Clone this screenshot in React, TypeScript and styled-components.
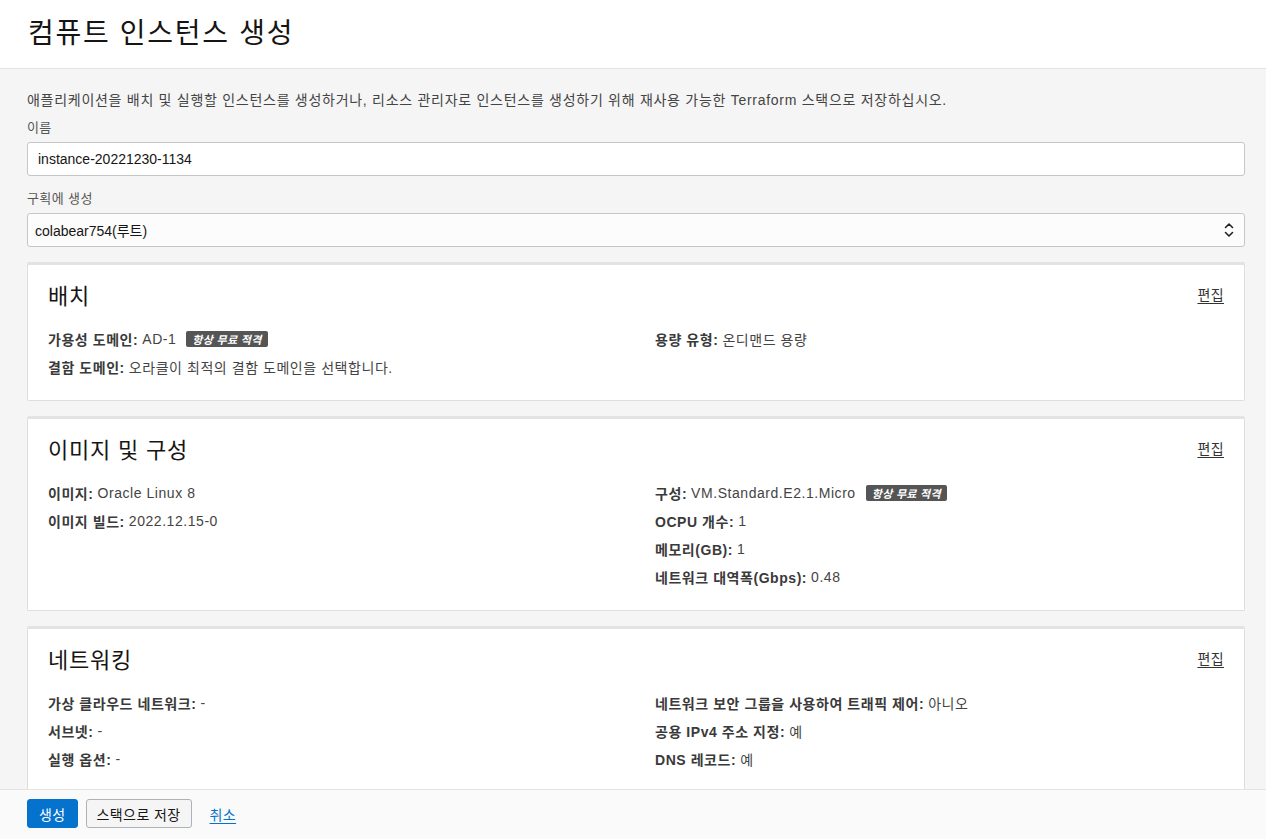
import React from "react";
import styled, { createGlobalStyle } from "styled-components";

const GlobalStyle = createGlobalStyle`
  html, body { margin: 0; padding: 0; height: 100%; }
  body {
    font-family: "Liberation Sans", "Noto Sans CJK KR", sans-serif;
    color: #333;
    background: #f5f5f5;
  }
  * { box-sizing: border-box; }
`;

const Page = styled.div`
  height: 100vh;
  display: flex;
  flex-direction: column;
  overflow: hidden;
`;

const Header = styled.header`
  flex: 0 0 69px;
  background: #fff;
  border-bottom: 1px solid #e3e3e3;
  padding: 0 28px;
  display: flex;
  align-items: center;
`;

const PageTitle = styled.h1`
  margin: 0 0 6px;
  font-size: 28px;
  font-weight: 400;
  color: #161513;
  letter-spacing: 1.7px;
`;

const Main = styled.main`
  flex: 1 1 auto;
  min-height: 0;
  overflow: hidden;
  padding: 21px 21px 0 27px;
`;

const Description = styled.p`
  margin: 0;
  font-size: 14px;
  line-height: 20px;
  color: #444;
  letter-spacing: 0.72px;
`;

const FieldLabel = styled.label<{ $top: number }>`
  display: block;
  font-size: 13px;
  line-height: 18px;
  color: #555;
  letter-spacing: 0.4px;
  margin: ${(p) => p.$top}px 0 5px;
`;

const TextInput = styled.input`
  display: block;
  width: 100%;
  height: 34px;
  border: 1px solid #c4c6ca;
  border-radius: 3px;
  background: #fff;
  padding: 0 10px;
  font-family: inherit;
  font-size: 14px;
  color: #161513;
  outline: none;
`;

const SelectBox = styled.div`
  height: 34px;
  border: 1px solid #c4c6ca;
  border-radius: 3px;
  background: #fcfcfc;
  padding: 0 10px 0 7px;
  font-size: 14px;
  color: #161513;
  display: flex;
  align-items: center;
  justify-content: space-between;
`;

const Cards = styled.div`
  display: flex;
  flex-direction: column;
  gap: 15px;
  margin-top: 15px;
`;

const Card = styled.section`
  flex-shrink: 0;
  background: #fff;
  border: 1px solid #dedede;
  border-top: 3px solid #e2e3e5;
  border-radius: 2px;
  padding: 14px 20px 19px 20px;
`;

const CardHead = styled.div`
  display: flex;
  justify-content: space-between;
  align-items: center;
  height: 30px;
`;

const CardTitle = styled.h2`
  margin: 0;
  font-size: 22px;
  font-weight: 400;
  color: #161513;
  letter-spacing: 0.8px;
`;

const EditLink = styled.a`
  font-size: 14px;
  color: #333;
  text-decoration: underline;
  text-underline-offset: 3px;
  letter-spacing: 0.4px;
  cursor: pointer;
`;

const Grid = styled.div`
  display: grid;
  grid-template-columns: 1fr 1fr;
  column-gap: 38px;
  margin-top: 16px;
`;

const Column = styled.div`
  display: flex;
  flex-direction: column;
`;

const Row = styled.div`
  flex-shrink: 0;
  height: 28px;
  display: flex;
  align-items: center;
  font-size: 14px;
  color: #444;
  letter-spacing: 0.55px;
  white-space: nowrap;
`;

const Key = styled.b`
  font-weight: 700;
  color: #3a3a3a;
  margin-right: 4px;
`;

const Badge = styled.span`
  display: inline-flex;
  align-items: center;
  height: 16px;
  margin-left: 10px;
  padding: 0 6px;
  background: #555;
  color: #fff;
  border-radius: 2px;
  font-size: 11px;
  font-weight: 700;
  font-style: italic;
  letter-spacing: 0.3px;
`;

const Footer = styled.footer`
  flex: 0 0 50px;
  background: #fafafa;
  border-top: 1px solid #e3e3e3;
  display: flex;
  align-items: center;
  padding: 0 27px 2px;
  gap: 8px;
`;

const Button = styled.button<{ $primary?: boolean }>`
  height: 29px;
  padding: 0 ${(p) => (p.$primary ? 11 : 10)}px;
  border-radius: 3px;
  font-family: inherit;
  font-size: 14px;
  letter-spacing: 0.4px;
  cursor: pointer;
  border: 1px solid ${(p) => (p.$primary ? "#0572ce" : "#aeb1b5")};
  background: ${(p) => (p.$primary ? "#0572ce" : "#f5f5f5")};
  color: ${(p) => (p.$primary ? "#fff" : "#161513")};
`;

const CancelLink = styled.a`
  margin-left: 10px;
  font-size: 14px;
  color: #0572ce;
  text-decoration: underline;
  text-underline-offset: 3px;
  letter-spacing: 0.4px;
  cursor: pointer;
`;

const Chevrons = () => (
  <svg width="10" height="16" viewBox="0 0 10 16" fill="none" stroke="#222" strokeWidth="1.6" strokeLinecap="round" strokeLinejoin="round">
    <path d="M1.5 5.5 L5 2 L8.5 5.5" />
    <path d="M1.5 10.5 L5 14 L8.5 10.5" />
  </svg>
);

type Item = { k: string; v?: string; badge?: boolean };

const Section = ({ title, left, right }: { title: string; left: Item[]; right: Item[] }) => (
  <Card>
    <CardHead>
      <CardTitle>{title}</CardTitle>
      <EditLink>편집</EditLink>
    </CardHead>
    <Grid>
      {[left, right].map((col, ci) => (
        <Column key={ci}>
          {col.map((it) => (
            <Row key={it.k}>
              <Key>{it.k}:</Key>
              {it.v}
              {it.badge && <Badge>항상 무료 적격</Badge>}
            </Row>
          ))}
        </Column>
      ))}
    </Grid>
  </Card>
);

export default function App() {
  return (
    <Page>
      <GlobalStyle />
      <Header>
        <PageTitle>컴퓨트 인스턴스 생성</PageTitle>
      </Header>
      <Main>
        <Description>
          애플리케이션을 배치 및 실행할 인스턴스를 생성하거나, 리소스 관리자로 인스턴스를 생성하기 위해 재사용 가능한 Terraform 스택으로 저장하십시오.
        </Description>
        <FieldLabel $top={9}>이름</FieldLabel>
        <TextInput defaultValue="instance-20221230-1134" />
        <FieldLabel $top={14}>구획에 생성</FieldLabel>
        <SelectBox>
          <span>colabear754(루트)</span>
          <Chevrons />
        </SelectBox>
        <Cards>
          <Section
            title="배치"
            left={[
              { k: "가용성 도메인", v: "AD-1", badge: true },
              { k: "결함 도메인", v: "오라클이 최적의 결함 도메인을 선택합니다." },
            ]}
            right={[{ k: "용량 유형", v: "온디맨드 용량" }]}
          />
          <Section
            title="이미지 및 구성"
            left={[
              { k: "이미지", v: "Oracle Linux 8" },
              { k: "이미지 빌드", v: "2022.12.15-0" },
            ]}
            right={[
              { k: "구성", v: "VM.Standard.E2.1.Micro", badge: true },
              { k: "OCPU 개수", v: "1" },
              { k: "메모리(GB)", v: "1" },
              { k: "네트워크 대역폭(Gbps)", v: "0.48" },
            ]}
          />
          <Section
            title="네트워킹"
            left={[
              { k: "가상 클라우드 네트워크", v: "-" },
              { k: "서브넷", v: "-" },
              { k: "실행 옵션", v: "-" },
            ]}
            right={[
              { k: "네트워크 보안 그룹을 사용하여 트래픽 제어", v: "아니오" },
              { k: "공용 IPv4 주소 지정", v: "예" },
              { k: "DNS 레코드", v: "예" },
            ]}
          />
        </Cards>
      </Main>
      <Footer>
        <Button $primary>생성</Button>
        <Button>스택으로 저장</Button>
        <CancelLink>취소</CancelLink>
      </Footer>
    </Page>
  );
}
